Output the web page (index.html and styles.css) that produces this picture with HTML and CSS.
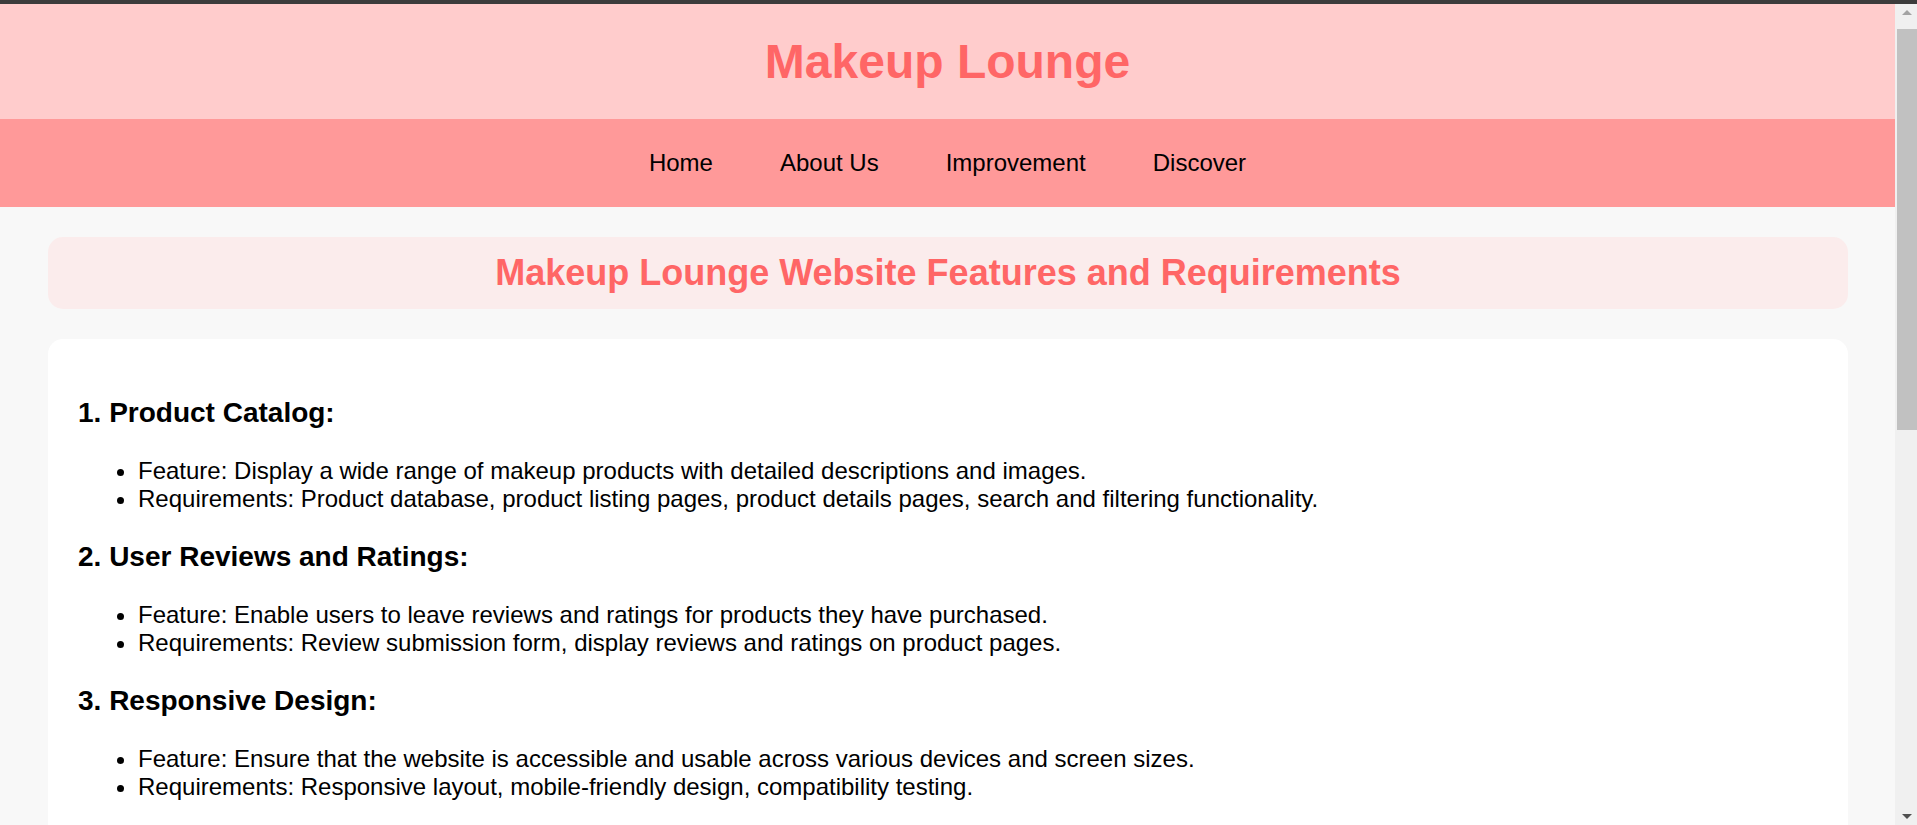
FILE: index.html
```html
<!DOCTYPE html>
<html lang="en">
<head>
<meta charset="utf-8">
<title>Makeup Lounge</title>
<link rel="stylesheet" href="styles.css">
</head>
<body>
<div class="window-bar"></div>
<div class="page">
  <header class="site-header">
    <h1 class="site-title">Makeup Lounge</h1>
  </header>
  <nav class="site-nav">
    <a class="nav-link" href="#">Home</a>
    <a class="nav-link" href="#">About Us</a>
    <a class="nav-link" href="#">Improvement</a>
    <a class="nav-link" href="#">Discover</a>
  </nav>
  <main class="main">
    <div class="page-heading">
      <h2 class="page-title">Makeup Lounge Website Features and Requirements</h2>
    </div>
    <section class="card">
      <h3 class="feature-title">1. Product Catalog:</h3>
      <ul class="feature-list">
        <li>Feature: Display a wide range of makeup products with detailed descriptions and images.</li>
        <li>Requirements: Product database, product listing pages, product details pages, search and filtering functionality.</li>
      </ul>
      <h3 class="feature-title">2. User Reviews and Ratings:</h3>
      <ul class="feature-list">
        <li>Feature: Enable users to leave reviews and ratings for products they have purchased.</li>
        <li>Requirements: Review submission form, display reviews and ratings on product pages.</li>
      </ul>
      <h3 class="feature-title">3. Responsive Design:</h3>
      <ul class="feature-list">
        <li>Feature: Ensure that the website is accessible and usable across various devices and screen sizes.</li>
        <li>Requirements: Responsive layout, mobile-friendly design, compatibility testing.</li>
      </ul>
      <h3 class="feature-title">4. Shopping Cart and Checkout:</h3>
      <ul class="feature-list">
        <li>Feature: Allow users to add products to a cart and complete purchases securely.</li>
        <li>Requirements: Cart management, secure payment gateway, order confirmation emails.</li>
      </ul>
      <h3 class="feature-title">5. User Accounts:</h3>
      <ul class="feature-list">
        <li>Feature: Let users create accounts to manage orders, wishlists and preferences.</li>
        <li>Requirements: Registration and login, profile pages, order history.</li>
      </ul>
      <h3 class="feature-title">6. Beauty Tips and Tutorials:</h3>
      <ul class="feature-list">
        <li>Feature: Provide makeup tips, tutorials and trend articles.</li>
        <li>Requirements: Blog section, video embedding, content management system.</li>
      </ul>
    </section>
  </main>
</div>
<div class="scrollbar" aria-hidden="true">
  <svg class="scroll-arrow" width="20" height="17" viewBox="0 0 20 17"><polygon points="5,11 10,6 15,11" fill="#a3a3a3"/></svg>
  <div class="scroll-thumb"></div>
  <div class="scroll-rest"></div>
  <svg class="scroll-arrow" width="20" height="17" viewBox="0 0 20 17"><polygon points="5,6 10,11 15,6" fill="#505050"/></svg>
</div>
</body>
</html>
```

FILE: styles.css
```css
html {
  background: #f8f8f8;
}

body {
  margin: 0;
  font-family: "Liberation Sans", Arial, sans-serif;
  font-size: 24px;
  color: #000;
  background: #f8f8f8;
}

.window-bar {
  height: 4px;
  background: #3c3c3c;
}

.page {
  margin-right: 22px;
}

.scrollbar {
  position: fixed;
  top: 4px;
  right: 0;
  bottom: 0;
  width: 22px;
  background: #f0f0f0;
  display: flex;
  flex-direction: column;
  align-items: flex-end;
}

.scroll-arrow {
  flex: none;
  display: block;
}

.scroll-thumb {
  flex: none;
  width: 20px;
  height: 401px;
  margin-top: 8px;
  background: #c1c1c1;
}

.scroll-rest {
  flex: 1;
}

.site-header {
  background: #ffcccc;
  padding: 30px 0;
  text-align: center;
}

.site-title {
  margin: 0;
  font-size: 48px;
  font-weight: bold;
  color: #ff6666;
}

.site-nav {
  background: #ff9999;
  padding: 30px 0;
  display: flex;
  justify-content: center;
  gap: 67px;
}

.nav-link {
  color: #000;
  text-decoration: none;
  font-size: 24px;
}

.main {
  padding: 30px 47px 30px 48px;
  display: flex;
  flex-direction: column;
  gap: 30px;
}

.page-heading {
  background: #fbecec;
  border-radius: 15px;
  padding: 15px;
  text-align: center;
}

.page-title {
  margin: 0;
  font-size: 36px;
  line-height: 42px;
  font-weight: bold;
  color: #ff6666;
}

.card {
  background: #ffffff;
  border-radius: 15px;
  padding: 30px;
}

.feature-title {
  font-size: 28px;
  font-weight: bold;
  margin: 28px 0;
}

.feature-list {
  margin: 24px 0;
  padding-left: 60px;
}
```
